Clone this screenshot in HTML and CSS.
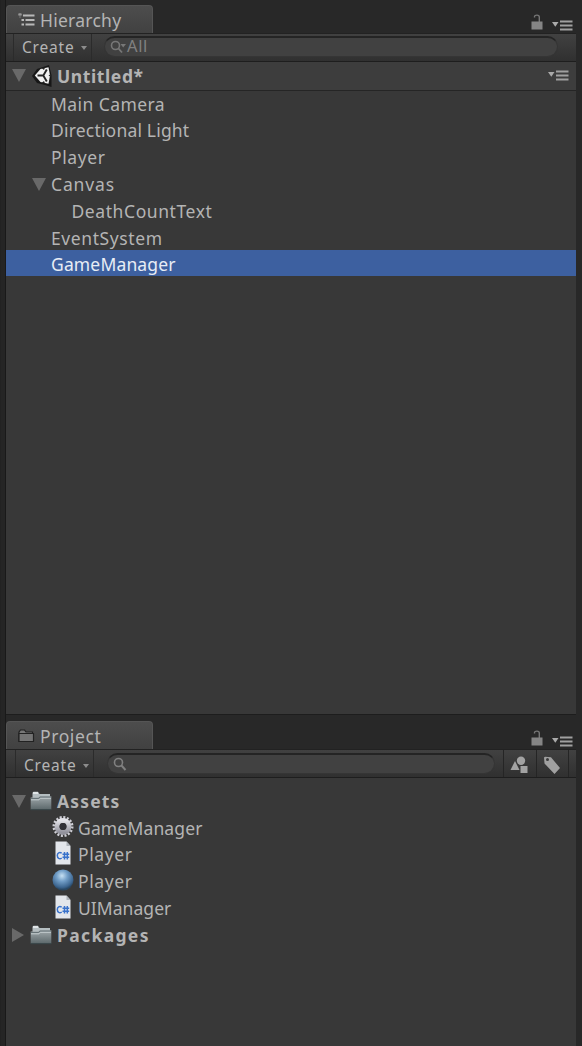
FILE: index.html
```html
<!DOCTYPE html>
<html lang="en">
<head>
<meta charset="utf-8">
<title>Editor</title>
<link rel="stylesheet" href="styles.css">
</head>
<body>
<svg width="0" height="0" class="defs">
  <defs>
    <linearGradient id="folderFill" x1="0" y1="0" x2="0" y2="1"><stop offset="0" stop-color="#a1a9ac"/><stop offset="1" stop-color="#5c686b"/></linearGradient>
    <radialGradient id="ballFill" cx=".45" cy=".3" r=".65"><stop offset="0" stop-color="#c6e0f2"/><stop offset=".4" stop-color="#739fc8"/><stop offset=".85" stop-color="#3c658f"/><stop offset="1" stop-color="#294763"/></radialGradient>
    <linearGradient id="gearFill" x1="0" y1="0" x2="0" y2="1"><stop offset="0" stop-color="#e2e2e8"/><stop offset="1" stop-color="#92929c"/></linearGradient>
    <symbol id="lock" viewBox="0 0 12 16"><path d="M3.500 3.500V2.800C3.500 .5 8.300 .5 8.300 3V8" fill="none" stroke="#777" stroke-width="1.400"/><rect x=".5" y="7.500" width="11" height="8" fill="#858585"/></symbol>
    <symbol id="menu" viewBox="0 0 21 11"><path d="M0 2h6.500L3.300 6.800z" fill="#aaa"/><path d="M8 1.500h12.500M8 5.500h12.500M8 9.500h12.500" stroke="#a0a0a0" stroke-width="1.800"/></symbol>
    <symbol id="folder" viewBox="0 0 22 20"><path d="M2.500 4V1.800L3.500 .8H8L9.500 3H20V7H2.500z" fill="#b5bec1"/><path d="M3 2h5" stroke="#e0e5e7" stroke-width="2"/><path d="M.7 6.500H8l1.500-1.300h11.800V18.500H.7z" fill="url(#folderFill)"/><path d="M1 8.800h8l1.500-1.500H21" fill="none" stroke="#c4cccf"/><path d="M1 7.500h7.500L10 6h11" fill="none" stroke="#526064" stroke-width=".7"/><path d="M.7 18.700h20.600" stroke="#38474a"/></symbol>
    <symbol id="script" viewBox="0 0 16 24"><path d="M.5 .5H11.500L15.500 5V23.500H.5z" fill="#e3e6eb"/><path d="M11.500 .5V5h4z" fill="#aeb3ba"/><path d="M6.700 12.200C4.500 10.800 2.300 12 2.300 14.600s2.200 4 4.400 2.400M9.500 11v7.500M12.300 11v7.500M7.500 13.200h6.700M7.500 16.300h6.700" fill="none" stroke="#3972cb" stroke-width="1.500"/></symbol>
  </defs>
</svg>
<main class="editor">
  <section class="panel hierarchy">
    <header class="tabs">
      <div class="tab">
        <svg class="tab-icon" viewBox="0 0 18 16"><path d="M.5 2.500h3M5 3.500h11.500M3.500 8h2.500M7.500 8h9M3.500 12.500h2.500M7.500 12.500h9" stroke="#b9b9b9" stroke-width="1.900"/><path d="M2 2v4" stroke="#777"/></svg>
        <span class="t-hierarchy">Hierarchy</span>
      </div>
      <div class="tab-tools"><svg class="lock"><use href="#lock"/></svg><svg class="menu"><use href="#menu"/></svg></div>
    </header>
    <div class="toolbar">
      <div class="create"><span>Create</span><i class="caret"></i></div>
      <div class="search"><svg class="glass" viewBox="0 0 17 14"><circle cx="5.500" cy="5.500" r="4" fill="none" stroke="#777" stroke-width="1.600"/><path d="M8.500 8.500L12 12.500" stroke="#777" stroke-width="1.800"/><path d="M10.500 4H16L13.200 7.500z" fill="#777"/></svg><span>All</span></div>
    </div>
    <div class="scene">
      <i class="fold down"></i>
      <svg class="unity" viewBox="0 0 20 22"><path d="M0 11L5 4 17 0 19.500 10 19.500 22 13 20 5 18z" fill="#171717"/><path d="M2.800 10.500L8.500 4 16.500 2.200 18 10.500 16.500 18.800 8.500 17z" fill="#f0f0f0"/><path d="M11.300 10.500H5.500M11.300 10.500L14.800 4.500M11.300 10.500L14.800 16.500" stroke="#242424" stroke-width="1.900"/><path d="M9.500 3L12 5 13 2.500zM9.500 18L12 16 13 18.500zM19 9L16.500 10.500 19 12z" fill="#242424"/></svg>
      <b class="t-untitled">Untitled*</b>
      <svg class="menu scene-menu"><use href="#menu"/></svg>
    </div>
    <div class="tree">
      <div class="row in1"><span class="t-camera">Main Camera</span></div>
      <div class="row in1"><span class="t-light">Directional Light</span></div>
      <div class="row in1"><span class="t-player">Player</span></div>
      <div class="row in0"><i class="fold down"></i><span class="t-canvas">Canvas</span></div>
      <div class="row in2"><span class="t-death">DeathCountText</span></div>
      <div class="row in1"><span class="t-event">EventSystem</span></div>
      <div class="row in1 selected"><span class="t-manager">GameManager</span></div>
    </div>
  </section>
  <section class="panel project">
    <header class="tabs">
      <div class="tab">
        <svg class="tab-icon" viewBox="0 0 18 16"><path d="M1 13.500V4L2.500 2H6.500L8 4H14.500V13.500z" fill="#777" stroke="#202020" stroke-width="1.200"/><path d="M1 5.500H15.500V13.500H1z" fill="#747474" stroke="#222" stroke-width="1.200"/></svg>
        <span class="t-project">Project</span>
      </div>
      <div class="tab-tools"><svg class="lock"><use href="#lock"/></svg><svg class="menu"><use href="#menu"/></svg></div>
    </header>
    <div class="toolbar">
      <div class="create"><span>Create</span><i class="caret"></i></div>
      <div class="search"><svg class="glass" viewBox="0 0 17 14"><circle cx="5.500" cy="5.500" r="4" fill="none" stroke="#808080" stroke-width="1.600"/><path d="M8.500 8.500L12.500 13" stroke="#808080" stroke-width="2"/></svg></div>
      <div class="filter"><svg width="18" height="18" viewBox="0 0 18 18"><circle cx="11" cy="4.700" r="4.200" fill="#a2a2a2"/><path d="M5 5L9.500 14H.5z" fill="#a2a2a2"/><path d="M10.500 10h7v7h-7z" fill="#a2a2a2"/></svg></div>
      <div class="filter"><svg width="18" height="19" viewBox="0 0 18 19"><path fill-rule="evenodd" d="M1 1.500L2 .8 8 1.300 17 12 11.500 18 1.500 7.500zM3 3.500a1.500 1.500 0 1 0 3 0 1.500 1.500 0 1 0-3 0" fill="#a0a0a0"/></svg></div>
    </div>
    <div class="tree">
      <div class="row root"><i class="fold down"></i><svg class="folder"><use href="#folder"/></svg><b class="t-assets">Assets</b></div>
      <div class="row item"><svg class="gear" viewBox="-11 -11 22 22"><circle r="9" fill="none" stroke="#cfcfd6" stroke-width="3" stroke-dasharray="2 1.534"/><circle r="5.900" fill="none" stroke="url(#gearFill)" stroke-width="5"/><circle r="3.500" fill="#303036"/></svg><span class="t-manager">GameManager</span></div>
      <div class="row item"><svg class="script"><use href="#script"/></svg><span class="t-player">Player</span></div>
      <div class="row item"><svg class="ball" viewBox="0 0 22 24"><circle cx="11" cy="12" r="10.500" fill="url(#ballFill)"/></svg><span class="t-player">Player</span></div>
      <div class="row item"><svg class="script"><use href="#script"/></svg><span class="t-ui">UIManager</span></div>
      <div class="row root"><i class="fold right"></i><svg class="folder"><use href="#folder"/></svg><b class="t-packages">Packages</b></div>
    </div>
  </section>
</main>
</body>
</html>
```
FILE: styles.css
```css
* { box-sizing: border-box; }
body { margin: 0; background: #282828; color: #b4b4b4; font: 17.5px/26.8px "Noto Sans", sans-serif; letter-spacing: .6px; overflow: hidden; }
svg { display: block; flex: none; }
.defs { position: absolute; }
.editor { height: 1046px; padding: 5px 6px 0 5px; display: flex; flex-direction: column; gap: 6px; border-left: 1px solid #222; background: linear-gradient(90deg, #252525 0 4px, #191919 4px 5px, #282828 5px); }
.panel { background: #383838; display: flex; flex-direction: column; white-space: nowrap; }
.hierarchy { height: 710px; border-bottom: 1px solid #1d1d1d; }
.project { flex: 1; }
.tabs { height: 28px; background: #282828; display: flex; justify-content: space-between; align-items: flex-end; }
.tab { width: 147px; height: 28px; padding-left: 11px; display: flex; align-items: center; gap: 4px; background: linear-gradient(#4d4d4d, #414141); border: 1px solid #555; border-bottom: 0; border-radius: 4px 4px 0 0; }
.tab-icon { width: 18px; height: 16px; }
.tab span { padding-top: 1px; }
.tab-tools { display: flex; align-items: flex-end; gap: 9px; padding: 0 3px 2px 0; }
.lock { width: 12px; height: 16px; }
.menu { width: 21px; height: 11px; }
.tab-tools .lock { margin-bottom: 1px; }
.toolbar { height: 28.500px; display: flex; align-items: center; background: linear-gradient(#414141, #303030); border-top: 1px solid #222; border-bottom: 1.500px solid #1e1e1e; padding-right: 18px; }
.create { width: 79px; height: 100%; margin-left: 7px; padding-left: 8px; display: flex; align-items: center; gap: 10px; border-left: 1px solid #2b2b2b; border-right: 1px solid #2b2b2b; font-size: 15.500px; letter-spacing: .8px; padding-top: 1px; }
.create span { width: 54px; }
.caret { border: 3.500px solid transparent; border-top: 4px solid #8c8c8c; border-bottom: 0; margin-left: -5px; }
.search { flex: 1; height: 21px; margin: 0 0 1px 12px; padding-left: 5px; display: flex; align-items: center; border-radius: 11px; background: #414141; border: 1px solid #353535; border-top: 2px solid #242424; color: #808080; font-size: 16.500px; }
.search span { margin-top: -2px; }
.glass { width: 17px; height: 14px; }
.scene { height: 29px; display: flex; align-items: center; background: #3d3d3d; border-bottom: 1.500px solid #252525; padding: 0 7px 0 6px; }
.scene b { padding-top: 1px; }
.fold { width: 0; height: 0; flex: none; }
.down { border: 7px solid transparent; border-top: 13px solid #696969; border-bottom: 0; }
.right { border: 7px solid transparent; border-left: 12px solid #696969; border-right: 0; margin-right: 2px; }
.unity { width: 20px; height: 22px; margin: 0 5px 0 6px; }
.scene-menu { margin-left: auto; }
.row { height: 26.800px; display: flex; align-items: center; }
.hierarchy .tree { margin-top: -1.700px; }
.hierarchy .row { padding-top: 3.600px; }
.in0 { padding-left: 26px; }
.in0 span { margin-left: 5px; }
.in1 { padding-left: 45px; }
.in2 { padding-left: 65.500px; }
.selected { background: #3d60a0; color: #e8edf5; }
.t-hierarchy { letter-spacing: .25px; }
.t-camera { letter-spacing: .42px; }
.t-light { letter-spacing: .19px; }
.t-canvas { letter-spacing: .85px; }
.t-death { letter-spacing: .58px; }
.t-manager { letter-spacing: .15px; }
.t-ui { letter-spacing: .05px; }
.t-assets { letter-spacing: 1.150px; }
.t-packages { letter-spacing: 1.350px; }
.project .toolbar { height: 29px; padding-right: 7px; }
.project .create { margin-left: 9px; padding-left: 8px; padding-top: 4px; }
.project .search { margin: 0 8px 0 13px; }
.filter { width: 33px; height: 100%; display: flex; justify-content: center; align-items: center; border-left: 1px solid #252525; padding-right: 2px; padding-top: 3px; }
.filter:last-child { border-right: 1px solid #252525; }
.project .tree { padding-top: 9.900px; }
.root { padding-left: 6px; }
.folder { width: 22px; height: 20px; margin: 0 5px 0 4px; }
.item { padding-left: 46px; }
.item span { margin-left: 4px; }
.gear { width: 22px; height: 23px; margin-top: -3px; }
.ball { width: 22px; height: 24px; margin-top: -3px; }
.script { width: 16px; height: 24px; margin: -3px 3px 0; }
```
